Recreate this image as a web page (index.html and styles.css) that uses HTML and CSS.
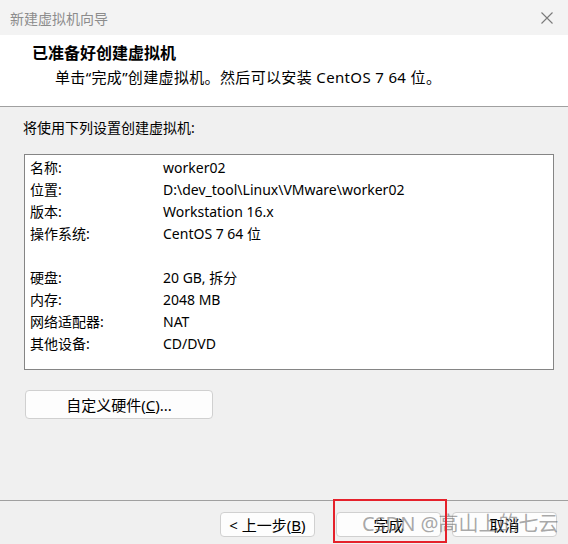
FILE: index.html
```html
<!DOCTYPE html>
<html lang="zh-CN">
<head>
<meta charset="utf-8">
<title>新建虚拟机向导</title>
<link rel="stylesheet" href="styles.css">
</head>
<body>
<div class="window">
  <div class="titlebar">
    <span class="title">新建虚拟机向导</span>
    <svg class="close" width="14" height="14" viewBox="0 0 14 14" aria-hidden="true">
      <path d="M1.5 1.5 L12.5 12.5 M12.5 1.5 L1.5 12.5" stroke="#7a7a7a" stroke-width="1.1" fill="none"/>
    </svg>
  </div>
  <div class="header">
    <div class="h-title">已准备好创建虚拟机</div>
    <div class="h-sub">单击“完成”创建虚拟机。然后可以安装 CentOS 7 64 位。</div>
  </div>
  <div class="body">
    <div class="intro">将使用下列设置创建虚拟机:</div>
    <div class="summary">
      <div class="row"><span class="k">名称:</span><span class="v">worker02</span></div>
      <div class="row"><span class="k">位置:</span><span class="v">D:\dev_tool\Linux\VMware\worker02</span></div>
      <div class="row"><span class="k">版本:</span><span class="v">Workstation 16.x</span></div>
      <div class="row"><span class="k">操作系统:</span><span class="v">CentOS 7 64 位</span></div>
      <div class="row"></div>
      <div class="row"><span class="k">硬盘:</span><span class="v">20 GB, 拆分</span></div>
      <div class="row"><span class="k">内存:</span><span class="v">2048 MB</span></div>
      <div class="row"><span class="k">网络适配器:</span><span class="v">NAT</span></div>
      <div class="row"><span class="k">其他设备:</span><span class="v">CD/DVD</span></div>
    </div>
    <button class="btn custom">自定义硬件(<u>C</u>)...</button>
  </div>
  <div class="footer">
    <button class="btn back">&lt; 上一步(<u>B</u>)</button>
    <button class="btn finish">完成</button>
    <button class="btn cancel">取消</button>
    <div class="watermark">CSDN @高山上的七云</div>
    <div class="highlight"></div>
  </div>
</div>
</body>
</html>
```

FILE: styles.css
```css
html, body {
  margin: 0;
  padding: 0;
  background: #f0f0f0;
}
body {
  font-family: "Noto Sans", "Noto Sans CJK SC", sans-serif;
  font-size: 14px;
  color: #000;
}
.window {
  width: 568px;
  height: 544px;
  display: flex;
  flex-direction: column;
  overflow: hidden;
  position: relative;
}
.titlebar {
  height: 35px;
  flex: none;
  background: #f3f3f3;
  display: flex;
  align-items: center;
  justify-content: space-between;
  padding: 0 14px 0 10px;
}
.title {
  color: #8c8c8c;
  font-size: 14px;
}
.close { display: block; }
.header {
  height: 72px;
  flex: none;
  background: #fff;
  border-bottom: 1px solid #a0a0a0;
  padding: 8px 0 0 32px;
  box-sizing: border-box;
}
.h-title {
  font-weight: bold;
  font-size: 16px;
  line-height: 20px;
}
.h-sub {
  font-size: 15px;
  line-height: 20px;
  margin-top: 4px;
  padding-left: 23px;
  letter-spacing: 0.35px;
}
.body {
  flex: 1;
  padding: 11px 14px 0 23px;
  border-bottom: 1px solid #a0a0a0;
}
.intro {
  line-height: 20px;
}
.summary {
  margin: 16px 0 0 1px;
  height: 216px;
  box-sizing: border-box;
  border: 1px solid #858585;
  background: #fff;
  padding: 2px 0 0 5px;
}
.row {
  display: flex;
  height: 22px;
  line-height: 22px;
}
.k { width: 133px; flex: none; }
.btn {
  font: inherit;
  font-size: 15px;
  color: #000;
  background: #fdfdfd;
  border: 1px solid #d0d0d0;
  border-radius: 4px;
  padding: 0;
  box-sizing: border-box;
}
.custom {
  display: block;
  margin: 20px 0 0 2px;
  width: 188px;
  height: 29px;
}
.footer {
  height: 43px;
  flex: none;
  display: flex;
  padding: 11px 0 0 220px;
  box-sizing: border-box;
  position: relative;
}
.footer .btn { height: 25px; }
.back { width: 95px; }
.finish { width: 105px; margin-left: 21px; }
.cancel { width: 105px; margin-left: 11px; }
.watermark {
  position: absolute;
  left: 362px;
  top: 10px;
  font-size: 20px;
  line-height: 26px;
  color: rgba(110, 110, 110, 0.6);
  white-space: nowrap;
  pointer-events: none;
}
.highlight {
  position: absolute;
  left: 333px;
  top: -2px;
  width: 114px;
  height: 44px;
  box-sizing: border-box;
  border: 2px solid #e5212b;
}
```
